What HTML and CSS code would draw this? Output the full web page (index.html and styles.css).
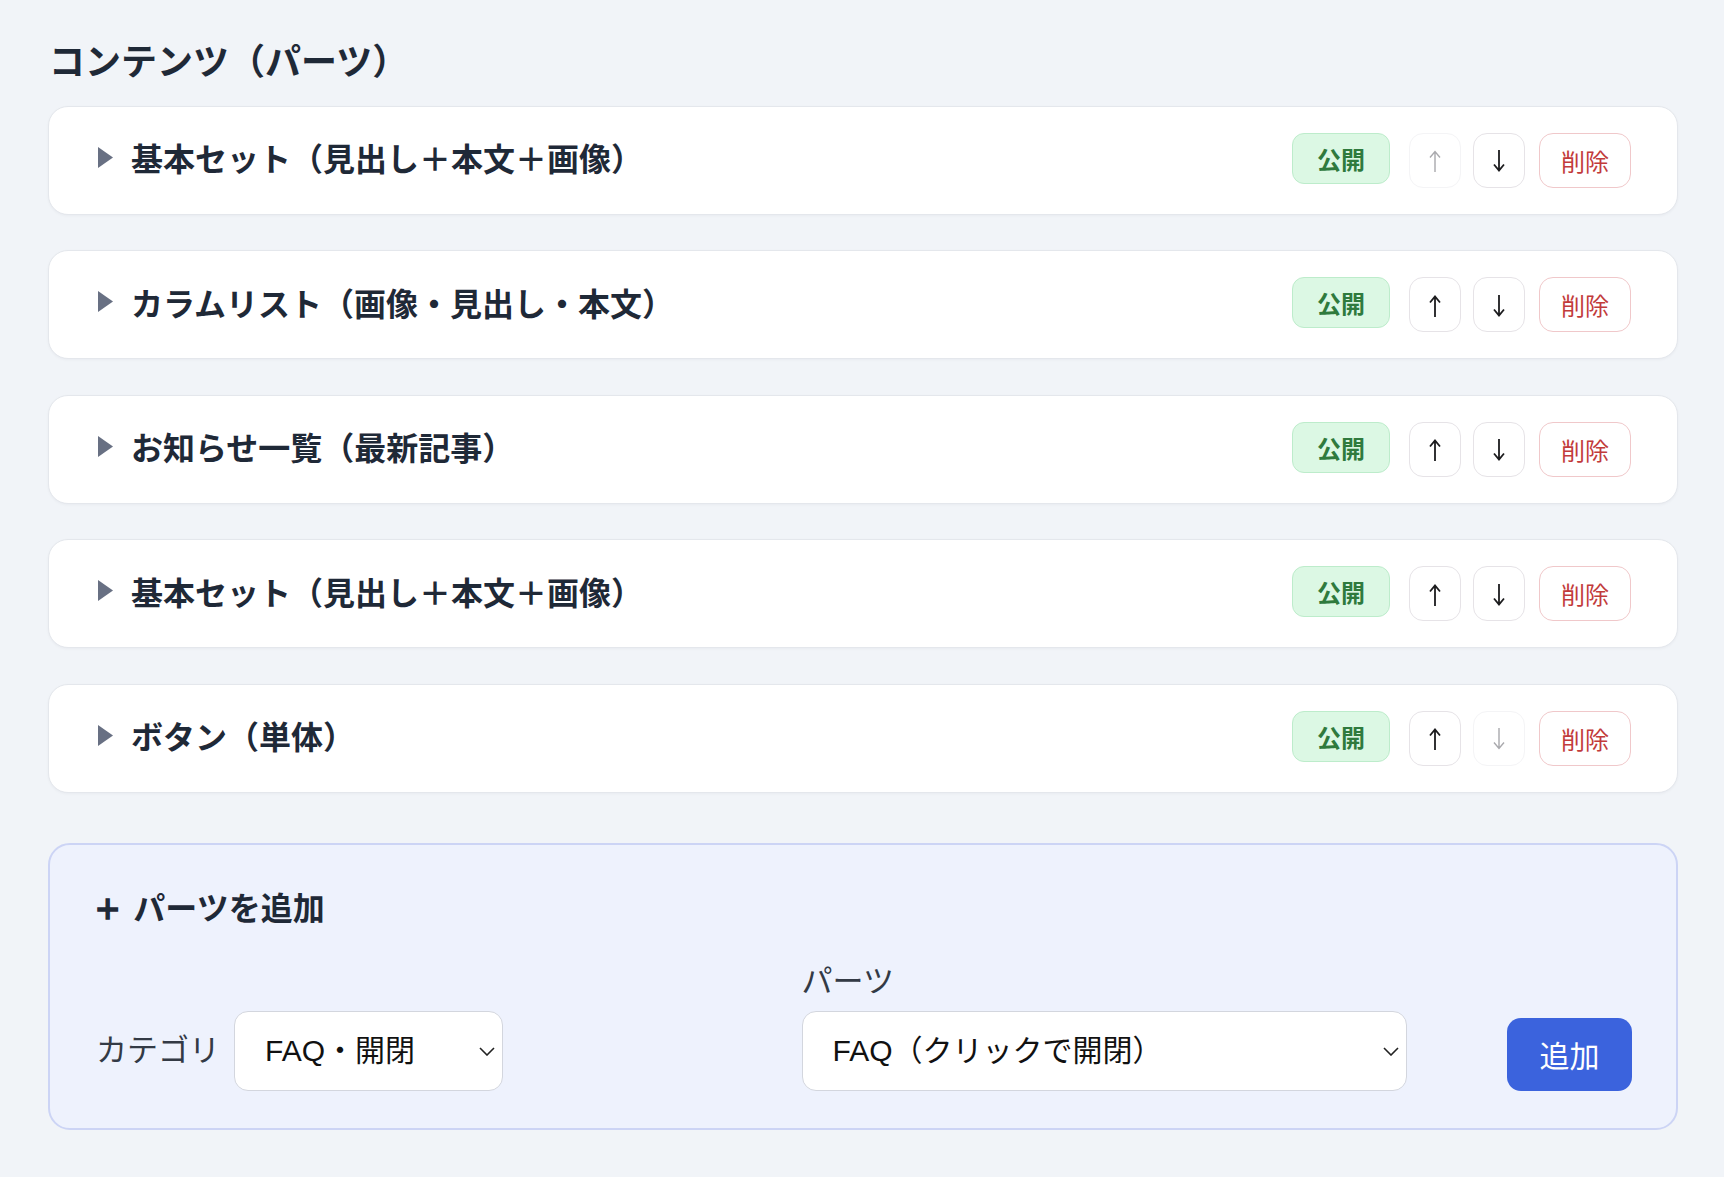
FILE: index.html
```html
<!DOCTYPE html>
<html lang="ja">
<head>
  <meta charset="UTF-8">
  <meta name="viewport" content="width=device-width, initial-scale=1.0">
  <title>コンテンツ（パーツ）</title>
  <link rel="stylesheet" href="styles.css">
</head>
<body>
  <main class="page">
    <h2 class="section-title">コンテンツ（パーツ）</h2>

    <div class="part-list">
      <div class="part-card">
        <div class="part-name">
          <svg class="caret" viewBox="0 0 15 21" width="15" height="21"><polygon points="0,0 15,10.5 0,21"/></svg>
          <span>基本セット（見出し＋本文＋画像）</span>
        </div>
        <div class="part-actions">
          <span class="badge-public">公開</span>
          <button class="btn-move" disabled><svg viewBox="0 0 14 24" width="14" height="24"><path d="M7 23V3M2 8.5L7 2.5l5 6"/></svg></button>
          <button class="btn-move"><svg viewBox="0 0 14 24" width="14" height="24"><path d="M7 1v20M2 15.5l5 6 5-6"/></svg></button>
          <button class="btn-delete">削除</button>
        </div>
      </div>

      <div class="part-card">
        <div class="part-name">
          <svg class="caret" viewBox="0 0 15 21" width="15" height="21"><polygon points="0,0 15,10.5 0,21"/></svg>
          <span>カラムリスト（画像・見出し・本文）</span>
        </div>
        <div class="part-actions">
          <span class="badge-public">公開</span>
          <button class="btn-move"><svg viewBox="0 0 14 24" width="14" height="24"><path d="M7 23V3M2 8.5L7 2.5l5 6"/></svg></button>
          <button class="btn-move"><svg viewBox="0 0 14 24" width="14" height="24"><path d="M7 1v20M2 15.5l5 6 5-6"/></svg></button>
          <button class="btn-delete">削除</button>
        </div>
      </div>

      <div class="part-card">
        <div class="part-name">
          <svg class="caret" viewBox="0 0 15 21" width="15" height="21"><polygon points="0,0 15,10.5 0,21"/></svg>
          <span>お知らせ一覧（最新記事）</span>
        </div>
        <div class="part-actions">
          <span class="badge-public">公開</span>
          <button class="btn-move"><svg viewBox="0 0 14 24" width="14" height="24"><path d="M7 23V3M2 8.5L7 2.5l5 6"/></svg></button>
          <button class="btn-move"><svg viewBox="0 0 14 24" width="14" height="24"><path d="M7 1v20M2 15.5l5 6 5-6"/></svg></button>
          <button class="btn-delete">削除</button>
        </div>
      </div>

      <div class="part-card">
        <div class="part-name">
          <svg class="caret" viewBox="0 0 15 21" width="15" height="21"><polygon points="0,0 15,10.5 0,21"/></svg>
          <span>基本セット（見出し＋本文＋画像）</span>
        </div>
        <div class="part-actions">
          <span class="badge-public">公開</span>
          <button class="btn-move"><svg viewBox="0 0 14 24" width="14" height="24"><path d="M7 23V3M2 8.5L7 2.5l5 6"/></svg></button>
          <button class="btn-move"><svg viewBox="0 0 14 24" width="14" height="24"><path d="M7 1v20M2 15.5l5 6 5-6"/></svg></button>
          <button class="btn-delete">削除</button>
        </div>
      </div>

      <div class="part-card">
        <div class="part-name">
          <svg class="caret" viewBox="0 0 15 21" width="15" height="21"><polygon points="0,0 15,10.5 0,21"/></svg>
          <span>ボタン（単体）</span>
        </div>
        <div class="part-actions">
          <span class="badge-public">公開</span>
          <button class="btn-move"><svg viewBox="0 0 14 24" width="14" height="24"><path d="M7 23V3M2 8.5L7 2.5l5 6"/></svg></button>
          <button class="btn-move" disabled><svg viewBox="0 0 14 24" width="14" height="24"><path d="M7 1v20M2 15.5l5 6 5-6"/></svg></button>
          <button class="btn-delete">削除</button>
        </div>
      </div>
    </div>

    <section class="add-panel">
      <h3 class="add-title"><span class="plus">+</span>パーツを追加</h3>
      <div class="add-form">
        <label class="field-inline">
          <span class="field-label">カテゴリ</span>
          <span class="select-wrap select-category">
            <select>
              <option>FAQ・開閉</option>
              <option>基本</option>
              <option>リスト</option>
            </select>
            <svg class="chevron" viewBox="0 0 16 9" width="16" height="9"><path d="M1 1l7 7 7-7"/></svg>
          </span>
        </label>
        <label class="field-stack">
          <span class="field-label">パーツ</span>
          <span class="select-wrap">
            <select>
              <option>FAQ（クリックで開閉）</option>
            </select>
            <svg class="chevron" viewBox="0 0 16 9" width="16" height="9"><path d="M1 1l7 7 7-7"/></svg>
          </span>
        </label>
        <button class="btn-add">追加</button>
      </div>
    </section>
  </main>
</body>
</html>
```

FILE: styles.css
```css
:root {
  --bg: #f1f4f8;
  --card-bg: #ffffff;
  --card-border: #e4e7ec;
  --text: #1f2937;
  --muted: #687083;
  --green-bg: #dcf8e4;
  --green-border: #bdeccb;
  --green-text: #2f7a3d;
  --red-text: #c23b3b;
  --red-border: #f0c8ca;
  --panel-bg: #eef2fd;
  --panel-border: #ccd4f5;
  --primary: #3b63dd;
}
* { box-sizing: border-box; margin: 0; padding: 0; }
body {
  font-family: "Liberation Sans", "Noto Sans CJK JP", sans-serif;
  background: var(--bg);
  color: var(--text);
  min-height: 100vh;
}
.page {
  padding: 39px 46px 46px 48px;
}
.section-title {
  font-size: 36px;
  font-weight: 700;
  line-height: 48px;
  margin-bottom: 18.5px;
  padding-left: 1px;
}

/* part cards */
.part-list {
  display: flex;
  flex-direction: column;
  gap: 35.5px;
}
.part-card {
  background: var(--card-bg);
  border: 1px solid var(--card-border);
  border-radius: 20px;
  box-shadow: 0 1px 3px rgba(15, 23, 42, 0.04);
  height: 109px;
  padding: 0 46px 0 49px;
  display: flex;
  align-items: center;
  justify-content: space-between;
}
.part-name {
  display: flex;
  align-items: center;
  gap: 18px;
  padding-bottom: 6px;
  font-size: 32px;
  font-weight: 700;
}
.caret { fill: var(--muted); flex-shrink: 0; }
.part-actions {
  display: flex;
  align-items: center;
  gap: 12px;
}
.badge-public {
  display: inline-flex;
  align-items: center;
  justify-content: center;
  width: 98px;
  height: 51px;
  margin-right: 7px;
  margin-top: -4px;
  background: var(--green-bg);
  border: 1px solid var(--green-border);
  border-radius: 12px;
  color: var(--green-text);
  font-size: 24px;
  font-weight: 700;
}
.btn-move {
  width: 52px;
  height: 55px;
  display: inline-flex;
  align-items: center;
  justify-content: center;
  background: #fff;
  border: 1px solid #e6e3e7;
  border-radius: 14px;
  color: #1c1c1e;
  cursor: pointer;
}
.btn-move svg {
  fill: none;
  stroke: currentColor;
  stroke-width: 1.8;
  margin-top: 2px;
}
.btn-move:disabled {
  color: #a9a9ad;
  border-color: #f4f4f6;
  cursor: default;
}
.btn-move:disabled svg { stroke-width: 1.4; }
.btn-delete {
  width: 92px;
  height: 55px;
  margin-left: 2px;
  background: #fff;
  border: 1px solid var(--red-border);
  border-radius: 14px;
  color: var(--red-text);
  font-family: inherit;
  font-size: 24px;
  cursor: pointer;
}

/* add panel */
.add-panel {
  margin-top: 50px;
  background: var(--panel-bg);
  border: 2px solid var(--panel-border);
  border-radius: 22px;
  padding: 42px 44px 37px 46px;
}
.add-title {
  display: flex;
  align-items: center;
  font-size: 32px;
  font-weight: 700;
  line-height: 45px;
  margin-bottom: 29px;
}
.add-title .plus {
  font-size: 40px;
  font-weight: 400;
  -webkit-text-stroke: 1.5px currentColor;
  margin-right: 14px;
  line-height: 1;
}
.add-form {
  display: grid;
  grid-template-columns: 1fr 1fr auto;
  column-gap: 100px;
  align-items: end;
}
.field-label {
  font-size: 31px;
  line-height: 42px;
  color: #333a45;
}
.field-inline {
  display: flex;
  align-items: center;
  gap: 14px;
}
.field-stack {
  display: flex;
  flex-direction: column;
  gap: 8px;
}
.select-wrap {
  position: relative;
  display: block;
}
.select-category { width: 269px; }
.select-wrap select {
  appearance: none;
  -webkit-appearance: none;
  width: 100%;
  height: 80px;
  padding: 0 40px 0 30px;
  background: #fff;
  border: 1.5px solid #d3d6de;
  border-radius: 14px;
  color: #111;
  font-family: inherit;
  font-size: 30px;
}
.chevron {
  position: absolute;
  right: 8px;
  top: 36px;
  fill: none;
  stroke: #222;
  stroke-width: 1.6;
  pointer-events: none;
}
.btn-add {
  width: 125px;
  height: 73px;
  background: var(--primary);
  color: #fff;
  border: none;
  border-radius: 14px;
  font-family: inherit;
  font-size: 30px;
  cursor: pointer;
}
```
